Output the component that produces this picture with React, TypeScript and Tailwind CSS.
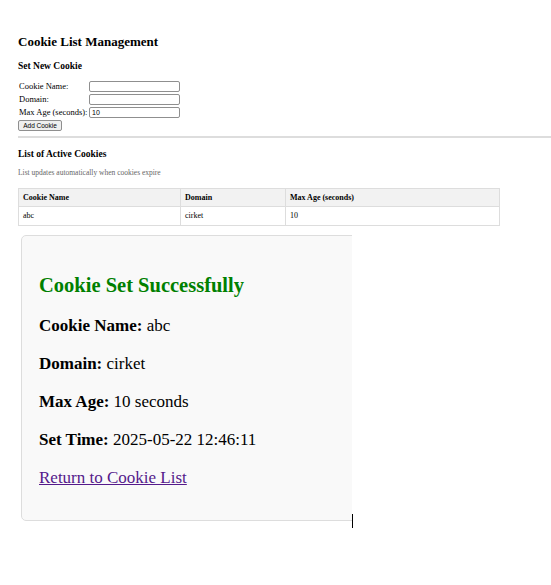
export default function App() {
  const cookies = [{ name: "abc", domain: "cirket", maxAge: 10 }];

  return (
    <div className="min-h-[585px] w-[551px] bg-white font-['Liberation_Serif',serif] text-black">
      {/* scaled-down list page */}
      <div className="pt-[34px]">
        <h1 className="ml-[18px] text-[13px] font-bold leading-[15px]">Cookie List Management</h1>
        <h2 className="ml-[18px] mt-[11px] text-[9.5px] font-bold leading-[12px]">Set New Cookie</h2>
        <form className="ml-[18px] mt-[9px] flex flex-col">
          <div className="flex flex-col gap-[2px] pl-[1px]">
            <div className="flex items-center">
              <label className="w-[70px] text-[8.5px] leading-[11px]">Cookie Name:</label>
              <input className="h-[11px] w-[91px] rounded-[2px] border border-[#8f8f8f] bg-white px-[2px] text-[7px]" />
            </div>
            <div className="flex items-center">
              <label className="w-[70px] text-[8.5px] leading-[11px]">Domain:</label>
              <input className="h-[11px] w-[91px] rounded-[2px] border border-[#8f8f8f] bg-white px-[2px] text-[7px]" />
            </div>
            <div className="flex items-center">
              <label className="w-[70px] whitespace-nowrap text-[8.5px] leading-[11px]">Max Age (seconds):</label>
              <input
                defaultValue="10"
                className="h-[11px] w-[91px] rounded-[2px] border border-[#8f8f8f] bg-white px-[2px] font-['Liberation_Sans',sans-serif] text-[7px] leading-[9px]"
              />
            </div>
          </div>
          <button
            type="button"
            className="mt-[2px] h-[11px] w-[44px] rounded-[2px] border border-[#8f8f8f] bg-[#efefef] font-['Liberation_Sans',sans-serif] text-[6.5px] leading-[9px]"
          >
            Add Cookie
          </button>
        </form>
        <div className="ml-[18px] mt-[5px] h-[2px] bg-[#dddddd]" />

        <h2 className="ml-[18px] mt-[10px] text-[9.5px] font-bold leading-[12px]">List of Active Cookies</h2>
        <p className="ml-[18px] mt-[8px] text-[7.5px] leading-[10px] text-[#666666]">
          List updates automatically when cookies expire
        </p>
        <table className="ml-[18px] mt-[10px] w-[482px] border-collapse text-[8px]">
          <thead>
            <tr className="h-[18px] bg-[#f2f2f2]">
              <th className="w-[162px] border border-[#dddddd] px-[4px] text-left font-bold">Cookie Name</th>
              <th className="w-[105px] border border-[#dddddd] px-[4px] text-left font-bold">Domain</th>
              <th className="border border-[#dddddd] px-[4px] text-left font-bold">Max Age (seconds)</th>
            </tr>
          </thead>
          <tbody>
            {cookies.map((c) => (
              <tr key={c.name} className="h-[19px]">
                <td className="border border-[#dddddd] px-[4px]">{c.name}</td>
                <td className="border border-[#dddddd] px-[4px]">{c.domain}</td>
                <td className="border border-[#dddddd] px-[4px]">{c.maxAge}</td>
              </tr>
            ))}
          </tbody>
        </table>
      </div>

      {/* success card, clipped on the right */}
      <div className="relative ml-[21px] mt-[9px] w-[332px]">
        <div className="w-[331px] overflow-hidden">
          <div className="h-[286px] w-[420px] rounded-[5px] border border-[#dddddd] bg-[#f9f9f9] px-[17px] pt-[37px]">
            <h2 className="text-[20.5px] font-bold leading-[24px] text-[#008000]">Cookie Set Successfully</h2>
            <div className="mt-[19px] flex flex-col gap-[18px] text-[17px] leading-[20px]">
              <p>
                <strong>Cookie Name:</strong> abc
              </p>
              <p>
                <strong>Domain:</strong> cirket
              </p>
              <p>
                <strong>Max Age:</strong> 10 seconds
              </p>
              <p>
                <strong>Set Time:</strong> 2025-05-22 12:46:11
              </p>
              <p>
                <a href="#" className="text-[#551a8b] underline">
                  Return to Cookie List
                </a>
              </p>
            </div>
          </div>
        </div>
        {/* text cursor */}
        <div className="absolute left-[331px] top-[279px] h-[14px] w-[1px] bg-black" />
      </div>
    </div>
  );
}
